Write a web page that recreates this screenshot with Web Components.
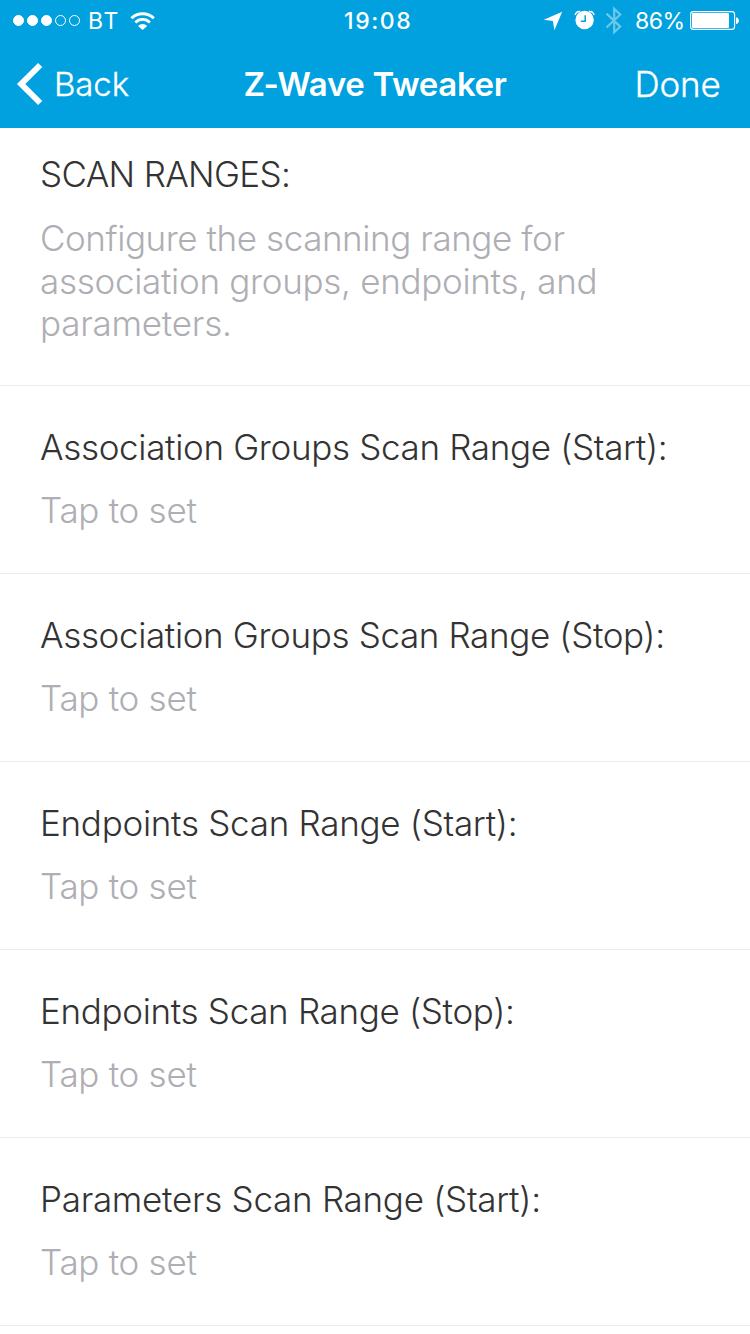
<!DOCTYPE html>
<html lang="en">
<head>
<meta charset="utf-8">
<title>Z-Wave Tweaker</title>
<style>
body{margin:0;background:#fff;font-family:Inter,"Liberation Sans",sans-serif;-webkit-font-smoothing:antialiased}
</style>
</head>
<body>
<settings-screen></settings-screen>
<script>
const define = (name, html) => {
  const template = document.createElement('template');
  template.innerHTML = html;
  customElements.define(name, class extends HTMLElement {
    constructor() {
      super();
      this.attachShadow({mode: 'open'}).append(template.content.cloneNode(true));
    }
  });
};

define('signal-dots', `
<style>
:host{display:flex;gap:3px}
i{box-sizing:border-box;width:11px;height:11px;border-radius:50%;border:1px solid #fff}
.on{background:#fff}
</style>
<i class="on"></i><i class="on"></i><i class="on"></i><i></i><i></i>`);

define('wifi-icon', `
<style>:host{display:block}svg{display:block}</style>
<svg width="26" height="20" viewBox="130 10 26 20" fill="none" stroke="#fff" stroke-width="3">
<path d="M131.4 17.3A16 16 0 0 1 153.8 17.3"/>
<path d="M135.3 21.5A10.3 10.3 0 0 1 149.9 21.5" stroke-width="2.7"/>
<path d="M142.6 29L138 24.9A6.6 6.6 0 0 1 147.2 24.9Z" fill="#fff" stroke="none"/>
</svg>`);

define('status-icons', `
<style>:host{display:block}svg{display:block}</style>
<svg width="82" height="30" viewBox="542 6 82 30" fill="#fff">
<path d="M562.2 11.7L543.8 19.8L552.9 20.9L554.4 30.2Z"/>
<circle cx="584.6" cy="20" r="9.2"/>
<path d="M575.2 15A4.2 4.2 0 0 1 580.2 11.5M589 11.5A4.2 4.2 0 0 1 594 15" fill="none" stroke="#fff" stroke-width="1.5"/>
<path d="M585.2 15.3V21.2H580.8" fill="none" stroke="#00a1de" stroke-width="1.5"/>
<path d="M606.5 13.6L620.2 26.6L614.2 32.3V8.9L620.2 14.5L606.5 27.5" fill="none" stroke="#fff" stroke-width="2.2" opacity=".42"/>
</svg>`);

define('battery-icon', `
<style>:host{display:block}svg{display:block}</style>
<svg width="50" height="20" viewBox="690 11 50 20">
<rect x="690.6" y="11.6" width="44" height="17.8" rx="2.8" fill="none" stroke="#fff" stroke-width="1.1"/>
<rect x="692" y="13" width="37" height="15" rx="1" fill="#fff"/>
<path d="M736 17.2C739.9 17.6 739.9 23.6 736 24Z" fill="#fff"/>
</svg>`);

define('status-bar', `
<style>
:host{display:flex;align-items:center;height:41px;box-sizing:border-box;font-size:23px;line-height:30px;color:#fff}
.left{display:flex;align-items:center;width:331px;padding-left:13px}
.carrier{width:42px;padding-left:8px;letter-spacing:1.8px}
.time{width:198px;font-weight:500;letter-spacing:1.6px}
.pct{width:55px;padding-left:11px;letter-spacing:-.5px}
</style>
<div class="left"><signal-dots></signal-dots><span class="carrier">BT</span><wifi-icon></wifi-icon></div>
<span class="time">19:08</span><status-icons></status-icons><span class="pct">86%</span><battery-icon></battery-icon>`);

define('nav-bar', `
<style>
:host{display:grid;grid-template-columns:1fr auto 1fr;align-items:center;height:86px;color:#fff;font-size:33px;line-height:44px;font-weight:300}
.back{display:flex;align-items:center;padding-left:16px;letter-spacing:-.1px;-webkit-text-stroke:.35px #fff}
.back svg{margin-right:10px}
.title{font-weight:600;letter-spacing:-.33px}
.done{padding-right:29.5px;text-align:right;font-size:35px;letter-spacing:-.17px;-webkit-text-stroke:.3px #fff}
</style>
<div class="back"><svg width="28" height="44" viewBox="16 62 28 44" fill="none" stroke="#fff" stroke-width="6"><path d="M40.2 65L21.2 84L40.2 103"/></svg><slot name="back"></slot></div>
<div class="title"><slot></slot></div>
<div class="done"><slot name="done"></slot></div>`);

define('setting-row', `
<style>
:host{display:block;box-sizing:border-box;height:188px;padding:40px 40px 0;border-bottom:1px solid #ebebec;font-size:35px;line-height:42px;font-weight:300;white-space:nowrap}
.label{color:#333;letter-spacing:var(--label-spacing,-.285px)}
.value{margin-top:21px;color:#aeaeb4;letter-spacing:-.28px}
</style>
<div class="label"><slot></slot></div><div class="value"><slot name="value">Tap to set</slot></div>`);

define('section-intro', `
<style>
:host{display:block;box-sizing:border-box;height:258px;padding:25px 40px 0;border-bottom:1px solid #ebebec;font-size:35px;line-height:42px;font-weight:300;white-space:nowrap}
.label{color:#333;letter-spacing:-.67px}
.text{margin-top:22px;line-height:42.6px;color:#aeaeb4}
</style>
<div class="label"><slot></slot></div><div class="text"><slot name="text"></slot></div>`);

define('settings-screen', `
<style>
:host{display:block;height:1334px;overflow:hidden;background:#fff}
header{height:128px;background:#00a1de;display:flex;flex-direction:column}
.l1{letter-spacing:-.43px}.l2{letter-spacing:-.3px}.l3{letter-spacing:-.235px}
</style>
<header><status-bar></status-bar><nav-bar><span slot="back">Back</span>Z-Wave Tweaker<span slot="done">Done</span></nav-bar></header>
<main>
<section-intro>SCAN RANGES:<span slot="text"><span class="l1">Configure the scanning range for</span><br><span class="l2">association groups, endpoints, and</span><br><span class="l3">parameters.</span></span></section-intro>
<setting-row style="--label-spacing:-.335px">Association Groups Scan Range (Start):</setting-row>
<setting-row style="--label-spacing:-.365px">Association Groups Scan Range (Stop):</setting-row>
<setting-row>Endpoints Scan Range (Start):</setting-row>
<setting-row style="--label-spacing:-.325px">Endpoints Scan Range (Stop):</setting-row>
<setting-row>Parameters Scan Range (Start):</setting-row>
</main>`);
</script>
</body>
</html>
